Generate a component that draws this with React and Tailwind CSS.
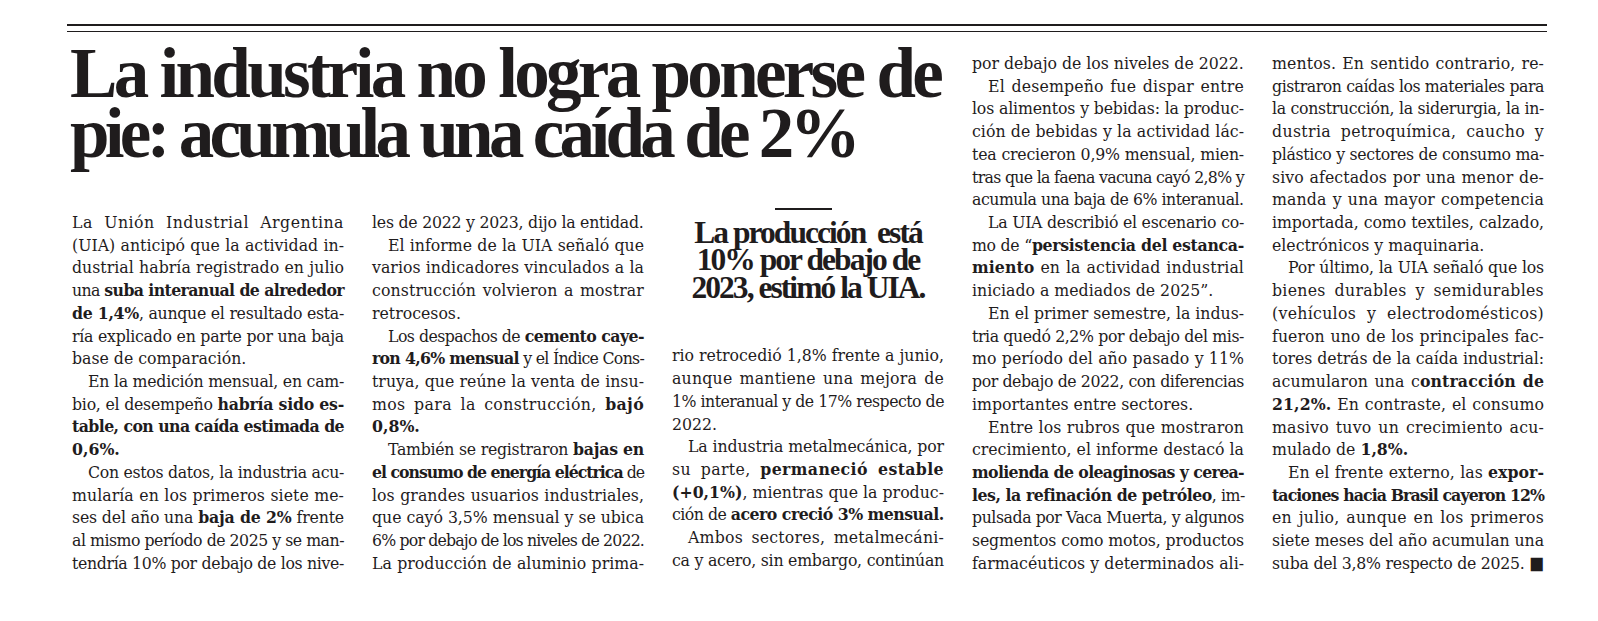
import { useLayoutEffect, useRef, useState } from "react";

const col1 = [
  {
    indent: false,
    lines: [
      "La Unión Industrial Argentina",
      "(UIA) anticipó que la actividad in-",
      "dustrial habría registrado en julio",
      "una **suba interanual de alrededor**",
      "**de 1,4%**, aunque el resultado esta-",
      "ría explicado en parte por una baja",
      "base de comparación.",
    ],
  },
  {
    indent: true,
    lines: [
      "En la medición mensual, en cam-",
      "bio, el desempeño **habría sido es-**",
      "**table, con una caída estimada de**",
      "**0,6%.**",
    ],
  },
  {
    indent: true,
    open: true,
    lines: [
      "Con estos datos, la industria acu-",
      "mularía en los primeros siete me-",
      "ses del año una **baja de 2%** frente",
      "al mismo período de 2025 y se man-",
      "tendría 10% por debajo de los nive-",
    ],
  },
];

const col2 = [
  { indent: false, lines: ["les de 2022 y 2023, dijo la entidad."] },
  {
    indent: true,
    lines: [
      "El informe de la UIA señaló que",
      "varios indicadores vinculados a la",
      "construcción volvieron a mostrar",
      "retrocesos.",
    ],
  },
  {
    indent: true,
    lines: [
      "Los despachos de **cemento caye-**",
      "**ron 4,6% mensual** y el Índice Cons-",
      "truya, que reúne la venta de insu-",
      "mos para la construcción, **bajó**",
      "**0,8%.**",
    ],
  },
  {
    indent: true,
    open: true,
    lines: [
      "También se registraron **bajas en**",
      "**el consumo de energía eléctrica** de",
      "los grandes usuarios industriales,",
      "que cayó 3,5% mensual y se ubica",
      "6% por debajo de los niveles de 2022.",
      "La producción de aluminio prima-",
    ],
  },
];

const col3 = [
  {
    indent: false,
    lines: [
      "rio retrocedió 1,8% frente a junio,",
      "aunque mantiene una mejora de",
      "1% interanual y de 17% respecto de",
      "2022.",
    ],
  },
  {
    indent: true,
    lines: [
      "La industria metalmecánica, por",
      "su parte, **permaneció estable**",
      "**(+0,1%)**, mientras que la produc-",
      "ción de **acero creció 3% mensual.**",
    ],
  },
  {
    indent: true,
    open: true,
    lines: ["Ambos sectores, metalmecáni-", "ca y acero, sin embargo, continúan"],
  },
];

const col4 = [
  { indent: false, lines: ["por debajo de los niveles de 2022."] },
  {
    indent: true,
    lines: [
      "El desempeño fue dispar entre",
      "los alimentos y bebidas: la produc-",
      "ción de bebidas y la actividad lác-",
      "tea crecieron 0,9% mensual, mien-",
      "tras que la faena vacuna cayó 2,8% y",
      "acumula una baja de 6% interanual.",
    ],
  },
  {
    indent: true,
    lines: [
      "La UIA describió el escenario co-",
      "mo de “**persistencia del estanca-**",
      "**miento** en la actividad industrial",
      "iniciado a mediados de 2025”.",
    ],
  },
  {
    indent: true,
    lines: [
      "En el primer semestre, la indus-",
      "tria quedó 2,2% por debajo del mis-",
      "mo período del año pasado y 11%",
      "por debajo de 2022, con diferencias",
      "importantes entre sectores.",
    ],
  },
  {
    indent: true,
    open: true,
    lines: [
      "Entre los rubros que mostraron",
      "crecimiento, el informe destacó la",
      "**molienda de oleaginosas y cerea-**",
      "**les, la refinación de petróleo**, im-",
      "pulsada por Vaca Muerta, y algunos",
      "segmentos como motos, productos",
      "farmacéuticos y determinados ali-",
    ],
  },
];

const col5 = [
  {
    indent: false,
    lines: [
      "mentos. En sentido contrario, re-",
      "gistraron caídas los materiales para",
      "la construcción, la siderurgia, la in-",
      "dustria petroquímica, caucho y",
      "plástico y sectores de consumo ma-",
      "sivo afectados por una menor de-",
      "manda y una mayor competencia",
      "importada, como textiles, calzado,",
      "electrónicos y maquinaria.",
    ],
  },
  {
    indent: true,
    lines: [
      "Por último, la UIA señaló que los",
      "bienes durables y semidurables",
      "(vehículos y electrodomésticos)",
      "fueron uno de los principales fac-",
      "tores detrás de la caída industrial:",
      "acumularon una c**ontracción de**",
      "**21,2%.** En contraste, el consumo",
      "masivo tuvo un crecimiento acu-",
      "mulado de **1,8%.**",
    ],
  },
  {
    indent: true,
    open: true,
    lines: [
      "En el frente externo, las **expor-**",
      "**taciones hacia Brasil cayeron 12%**",
      "en julio, aunque en los primeros",
      "siete meses del año acumulan una",
      "suba del 3,8% respecto de 2025. ■",
    ],
  },
];

function Rich({ text }) {
  return text.split("**").map((part, i) =>
    i % 2 ? (
      <b key={i} className="font-bold">
        {part}
      </b>
    ) : (
      <span key={i}>{part}</span>
    ),
  );
}

// one printed line: measured unjustified first, then squeezed when too wide
// or letter-spaced a little when loose, like a newspaper's justification
function Line({ text, indent, justify }) {
  const box = useRef(null);
  const inner = useRef(null);
  const [fit, setFit] = useState({ ls: 0, ready: false });

  useLayoutEffect(() => {
    const avail = box.current.clientWidth - (indent ? 16 : 0);
    const w = inner.current.getBoundingClientRect().width;
    const n = inner.current.textContent.length;
    let ls = 0;
    if (w > avail) ls = -(w - avail + 0.4) / n;
    else if (justify) ls = Math.min(((avail - w) * 0.45) / n, 1.1);
    setFit({ ls, ready: true });
  }, [indent, justify]);

  const just = justify && fit.ready;

  return (
    <div
      ref={box}
      className={`h-[22.73px] whitespace-nowrap ${indent ? "pl-4" : ""} ${
        just ? "text-justify [text-align-last:justify]" : "text-left"
      }`}
      style={fit.ls ? { letterSpacing: `${fit.ls}px` } : undefined}
    >
      <span ref={inner}>
        <Rich text={text} />
      </span>
    </div>
  );
}

function Column({ paras, className = "" }) {
  return (
    <div className={className}>
      {paras.map((p, i) =>
        p.lines.map((l, j) => (
          <Line
            key={`${i}-${j}`}
            text={l}
            indent={j === 0 && p.indent}
            justify={j < p.lines.length - 1 || !!p.open}
          />
        )),
      )}
    </div>
  );
}

export default function App() {
  return (
    <div className="min-h-[621px] bg-white text-[#1f1c1d]">
      <div className="ml-[67px] w-[1480px] pt-[24px]">
        <div className="h-[1.5px] bg-[#1f1c1d]" />
        <div className="mt-[5px] h-[1.5px] bg-[#1f1c1d]" />

        <div className="flex gap-[28px] pl-[5px] font-['DejaVu_Serif_Condensed','DejaVu_Serif',serif] text-[17.5px] leading-[22.73px]">
          <div className="w-[872px]">
            <h1 className="-ml-[2px] mt-[11px] whitespace-nowrap font-['Liberation_Serif',serif] text-[71px] font-bold leading-[60px] tracking-[-0.052em]">
              La industria no logra ponerse de
              <br />
              <span className="tracking-[-0.066em]">pie: acumula una caída de 2%</span>
            </h1>

            <div className="mt-[48px] grid grid-cols-3 gap-[28px]">
              <Column paras={col1} />
              <Column paras={col2} />
              <div>
                <div className="h-[136.4px]">
                  <div className="-mt-[3px] ml-[103px] h-[1.5px] w-[57px] bg-[#1f1c1d]" />
                  <p className="mt-[9px] text-center font-['Liberation_Serif',serif] text-[31.5px] font-bold leading-[27.5px] tracking-[-0.062em]">
                    La producción&nbsp; está
                    <br />
                    10% por debajo de
                    <br />
                    2023, estimó la UIA.
                  </p>
                </div>
                <Column paras={col3} />
              </div>
            </div>
          </div>

          <Column paras={col4} className="mt-[20px] w-[272px]" />
          <Column paras={col5} className="mt-[20px] w-[272px]" />
        </div>
      </div>
    </div>
  );
}
